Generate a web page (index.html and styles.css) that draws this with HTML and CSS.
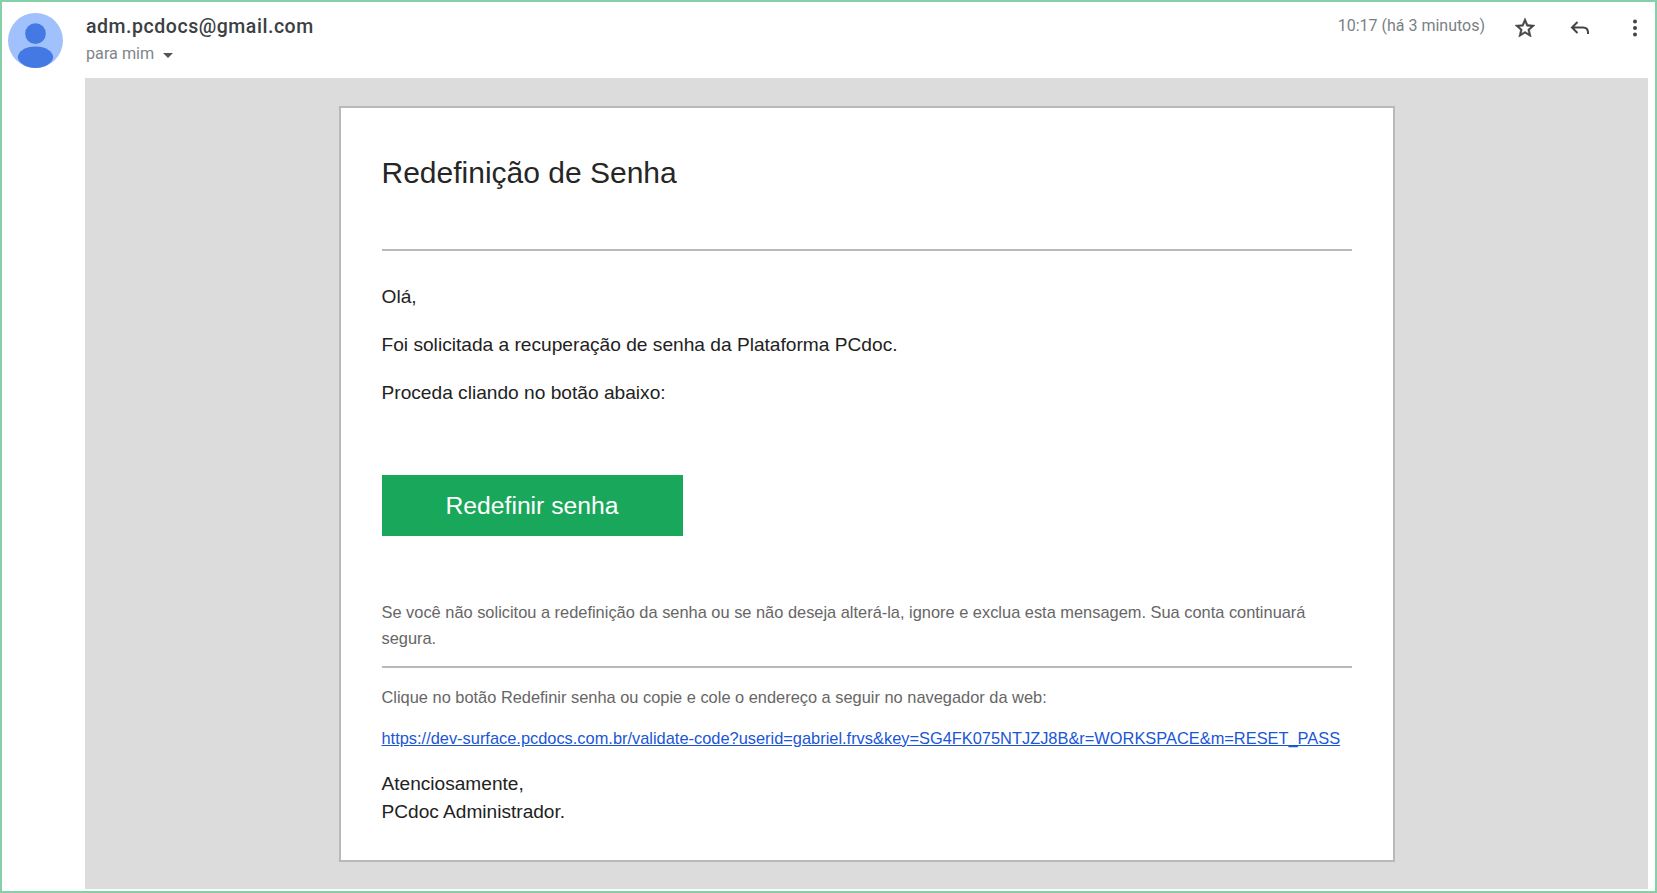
FILE: index.html
```html
<!DOCTYPE html>
<html lang="pt-BR">
<head>
    <meta charset="UTF-8">
    <title>Redefinição de Senha</title>
    <link rel="stylesheet" href="styles.css">
</head>
<body>
    <div class="mail">
        <header class="mail-header">
            <svg class="avatar" viewBox="0 0 56 56">
                <circle cx="28" cy="28" r="28" fill="#a0c1fb"/>
                <circle cx="28" cy="21" r="10.5" fill="#4478e2"/>
                <path d="M10 45c0-6 8-11 18-11s18 5 18 11c0 5-8 11-18 11S10 50 10 45z" fill="#4478e2"/>
            </svg>
            <div class="sender">
                <div class="sender-name">adm.pcdocs@gmail.com</div>
                <div class="sender-to">para mim <span class="caret"></span></div>
            </div>
            <div class="mail-time">10:17 (há 3 minutos)</div>
            <div class="mail-actions">
                <svg class="icon" viewBox="0 0 24 24"><path d="M22 9.24l-7.19-.62L12 2 9.19 8.63 2 9.24l5.46 4.73L5.82 21 12 17.27 18.18 21l-1.63-7.03L22 9.24zM12 15.4l-3.76 2.27 1-4.28-3.32-2.88 4.38-.38L12 6.1l1.71 4.04 4.38.38-3.32 2.88 1 4.28L12 15.4z" fill="#444" stroke="#444" stroke-width="0.5"/></svg>
                <svg class="icon" viewBox="0 0 24 24"><path d="M9.5 6L4 11.5 9.5 17M4.5 11.5H15c3 0 5 2 5 5v1.5" fill="none" stroke="#444" stroke-width="2"/></svg>
                <svg class="icon" viewBox="0 0 24 24"><circle cx="12" cy="5.5" r="2" fill="#444"/><circle cx="12" cy="12" r="2" fill="#444"/><circle cx="12" cy="18.5" r="2" fill="#444"/></svg>
            </div>
        </header>

        <main class="mail-body">
            <section class="card">
                <h1 class="card-title">Redefinição de Senha</h1>
                <hr class="rule">
                <p class="text first">Olá,</p>
                <p class="text">Foi solicitada a recuperação de senha da Plataforma PCdoc.</p>
                <p class="text">Proceda cliando no botão abaixo:</p>
                <a class="btn" href="#">Redefinir senha</a>
                <p class="note">Se você não solicitou a redefinição da senha ou se não deseja alterá-la, ignore e exclua esta mensagem. Sua conta continuará segura.</p>
                <hr class="rule rule-low">
                <p class="note-plain">Clique no botão Redefinir senha ou copie e cole o endereço a seguir no navegador da web:</p>
                <a class="link" href="#">https://dev-surface.pcdocs.com.br/validate-code?userid=gabriel.frvs&amp;key=SG4FK075NTJZJ8B&amp;r=WORKSPACE&amp;m=RESET_PASS</a>
                <p class="sign">Atenciosamente,<br>PCdoc Administrador.</p>
            </section>
        </main>
    </div>
</body>
</html>
```

FILE: styles.css
```css
* {
    margin: 0;
    padding: 0;
    box-sizing: border-box;
}

html, body {
    height: 100%;
    overflow: hidden;
}

body {
    background: #fff;
    font-family: 'Liberation Sans', Arial, sans-serif;
}

.mail {
    height: 893px;
    border: 2px solid #85d0a8;
    padding-bottom: 2px;
    display: flex;
    flex-direction: column;
}

/* cabecalho */
.mail-header {
    height: 76px;
    display: flex;
    align-items: flex-start;
    padding: 11px 0 0 6px;
    flex-shrink: 0;
}

.avatar {
    width: 55px;
    height: 55px;
    flex-shrink: 0;
}

.sender {
    margin-left: 23px;
    flex: 1;
}

.sender-name {
    font-family: Roboto, 'Liberation Sans', sans-serif;
    font-size: 19.5px;
    font-weight: 500;
    color: #3c4043;
    letter-spacing: 0.54px;
    line-height: 24px;
    margin-top: 2px;
}

.sender-to {
    font-family: Roboto, 'Liberation Sans', sans-serif;
    font-size: 16.2px;
    color: #80868b;
    line-height: 20px;
    margin-top: 5px;
}

.caret {
    display: inline-block;
    width: 0;
    height: 0;
    margin-left: 5px;
    vertical-align: 1px;
    border-left: 5px solid transparent;
    border-right: 5px solid transparent;
    border-top: 5px solid #555;
}

.mail-time {
    font-family: Roboto, 'Liberation Sans', sans-serif;
    font-size: 16px;
    color: #7b7f84;
    line-height: 20px;
    margin-top: 3px;
    margin-right: 28px;
}

.mail-actions {
    display: flex;
    gap: 31px;
    margin-right: 8px;
    margin-top: 3px;
}

.icon {
    width: 24px;
    height: 24px;
}

/* area cinza */
.mail-body {
    flex: 1;
    margin-left: 83px;
    margin-right: 7px;
    background: #dcdcdc;
    padding-top: 28px;
    display: flex;
    justify-content: center;
    align-items: flex-start;
}

.card {
    width: 1056px;
    height: 756px;
    background: #fff;
    border: 2px solid #b9b9b9;
    padding: 45px 41px 0 41px;
}

.card-title {
    font-size: 30px;
    font-weight: 400;
    color: #262626;
    line-height: 40px;
}

.rule {
    border: 0;
    height: 2px;
    background: #b9b9b9;
    margin-top: 56px;
}

.text {
    font-size: 19.15px;
    color: #222;
    line-height: 24px;
    margin-top: 24px;
}

.text.first {
    margin-top: 34px;
}

.btn {
    display: block;
    width: 301px;
    height: 61px;
    margin-top: 70px;
    background: #19a85b;
    color: #fff;
    font-size: 24.7px;
    line-height: 61px;
    text-align: center;
    text-decoration: none;
}

.note {
    font-size: 16.4px;
    line-height: 26.4px;
    color: #666;
    margin-top: 63px;
}

.rule-low {
    margin-top: 14px;
}

.note-plain {
    font-size: 16.4px;
    line-height: 20px;
    color: #666;
    margin-top: 19px;
}

.link {
    display: block;
    font-size: 16.4px;
    line-height: 20px;
    color: #1a56d6;
    margin-top: 21px;
}

.sign {
    font-size: 19.1px;
    line-height: 28.5px;
    color: #222;
    margin-top: 22px;
}
```
